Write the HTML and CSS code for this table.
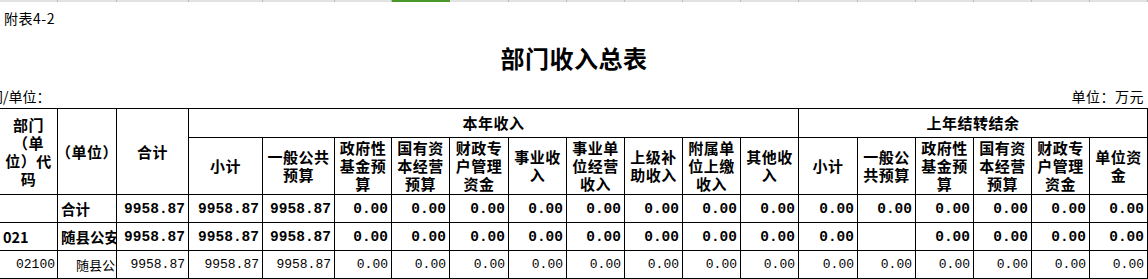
FILE: index.html
```html
<!DOCTYPE html>
<html lang="zh-CN">
<head>
<meta charset="utf-8">
<title>部门收入总表</title>
<link rel="stylesheet" href="styles.css">
</head>
<body>
<div class="topbar">
  <span></span><span></span><span></span><span></span><span></span><span></span><span class="sel"></span><span></span><span></span><span></span><span></span><span></span><span></span><span></span><span></span><span></span><span></span><span></span><span></span>
</div>
<div class="note">附表4-2</div>
<div class="title">部门收入总表</div>
<div class="units">
  <span class="unit-left">部门/单位：</span>
  <span class="unit-right">单位：万元</span>
</div>
<table class="grid">
  <colgroup>
    <col class="w58"><col class="w59"><col class="w72"><col class="w74"><col class="w72"><col class="w57"><col class="w58"><col class="w59"><col class="w58"><col class="w58"><col class="w58"><col class="w58"><col class="w58"><col class="w59"><col class="w58"><col class="w58"><col class="w58"><col class="w58"><col class="w58">
  </colgroup>
  <thead>
    <tr class="hr1">
      <th rowspan="2">部门<br>（单<br>位）代<br>码</th>
      <th rowspan="2" class="paren">（单位）</th>
      <th rowspan="2">合计</th>
      <th colspan="10">本年收入</th>
      <th colspan="6">上年结转结余</th>
    </tr>
    <tr class="hr2">
      <th>小计</th><th>一般公共预算</th><th>政府性基金预算</th><th>国有资本经营预算</th><th>财政专户管理资金</th><th>事业收入</th><th>事业单位经营收入</th><th>上级补助收入</th><th>附属单位上缴收入</th><th>其他收入</th>
      <th>小计</th><th>一般公共预算</th><th>政府性基金预算</th><th>国有资本经营预算</th><th>财政专户管理资金</th><th>单位资金</th>
    </tr>
  </thead>
  <tbody>
    <tr class="row bold">
      <td></td><td class="txt">合计</td>
      <td class="num">9958.87</td><td class="num">9958.87</td><td class="num">9958.87</td>
      <td class="num">0.00</td><td class="num">0.00</td><td class="num">0.00</td><td class="num">0.00</td><td class="num">0.00</td><td class="num">0.00</td><td class="num">0.00</td><td class="num">0.00</td>
      <td class="num">0.00</td><td class="num">0.00</td><td class="num">0.00</td><td class="num">0.00</td><td class="num">0.00</td><td class="num">0.00</td>
    </tr>
    <tr class="row bold">
      <td class="txt">021</td><td class="txt">随县公安局</td>
      <td class="num">9958.87</td><td class="num">9958.87</td><td class="num">9958.87</td>
      <td class="num">0.00</td><td class="num">0.00</td><td class="num">0.00</td><td class="num">0.00</td><td class="num">0.00</td><td class="num">0.00</td><td class="num">0.00</td><td class="num">0.00</td>
      <td class="num">0.00</td><td class="num"></td><td class="num">0.00</td><td class="num">0.00</td><td class="num">0.00</td><td class="num">0.00</td>
    </tr>
    <tr class="row plain">
      <td class="num code">02100</td><td class="txt indent">随县公安局</td>
      <td class="num">9958.87</td><td class="num">9958.87</td><td class="num">9958.87</td>
      <td class="num">0.00</td><td class="num">0.00</td><td class="num">0.00</td><td class="num">0.00</td><td class="num">0.00</td><td class="num">0.00</td><td class="num">0.00</td><td class="num">0.00</td>
      <td class="num">0.00</td><td class="num">0.00</td><td class="num">0.00</td><td class="num">0.00</td><td class="num">0.00</td><td class="num">0.00</td>
    </tr>
  </tbody>
</table>
</body>
</html>
```
FILE: styles.css
```css
* { box-sizing: border-box; }
html, body { margin: 0; padding: 0; background: #fff; }
body {
  width: 1148px;
  overflow: hidden;
  font-family: "Noto Sans CJK SC", sans-serif;
  color: #000;
  text-spacing-trim: space-all;
}

.topbar {
  display: grid;
  grid-template-columns: 58px 59px 72px 74px 72px 57px 58px 59px 58px 58px 58px 58px 58px 59px 58px 58px 58px 58px 58px;
  height: 2px;
  background: #e2e2e2;
}
.topbar span { border-right: 1px solid #bcbcbc; }
.topbar .sel { background: #4a982b; border-right-color: #4a982b; }

.note {
  padding: 8px 0 0 4px;
  height: 24px;
  font-size: 14px;
  line-height: 16px;
  letter-spacing: 0.5px;
}

.title {
  margin-top: 18px;
  text-align: center;
  font-size: 24px;
  line-height: 28px;
  font-weight: bold;
  letter-spacing: 0.5px;
}

.units {
  display: flex;
  justify-content: space-between;
  margin-top: 16px;
  font-size: 14px;
  line-height: 16px;
}
.unit-left { margin-left: -25px; white-space: nowrap; }
.unit-right { margin-right: 4px; white-space: nowrap; letter-spacing: 0.5px; }

.grid {
  border-collapse: collapse;
  table-layout: fixed;
  width: 1149px;
  margin: 4px 0 0 -1px;
}
.w57 { width: 57px; }
.w58 { width: 58px; }
.w59 { width: 59px; }
.w72 { width: 72px; }
.w74 { width: 74px; }

.grid th, .grid td {
  border: 1px solid #000;
  padding: 0 3px;
  overflow: hidden;
  white-space: nowrap;
  vertical-align: middle;
}
.grid th {
  padding: 0 1px;
  white-space: normal;
  text-align: center;
  font-size: 15px;
  line-height: 18px;
  font-weight: bold;
  letter-spacing: 0.5px;
}
.grid th.paren { white-space: nowrap; font-feature-settings: "halt"; }

.hr1 { height: 29px; }
.hr2 { height: 57px; }
.row { height: 28px; }

.num {
  text-align: right;
  font-family: "Liberation Mono", "Noto Sans CJK SC", monospace;
}
.txt { text-align: left; }
.grid .bold td { font-size: 14.5px; font-weight: bold; }
.grid .plain td { font-size: 13px; font-weight: normal; }
.grid td.code { padding-right: 2px; }
.grid td.indent { padding-left: 18px; }
```
